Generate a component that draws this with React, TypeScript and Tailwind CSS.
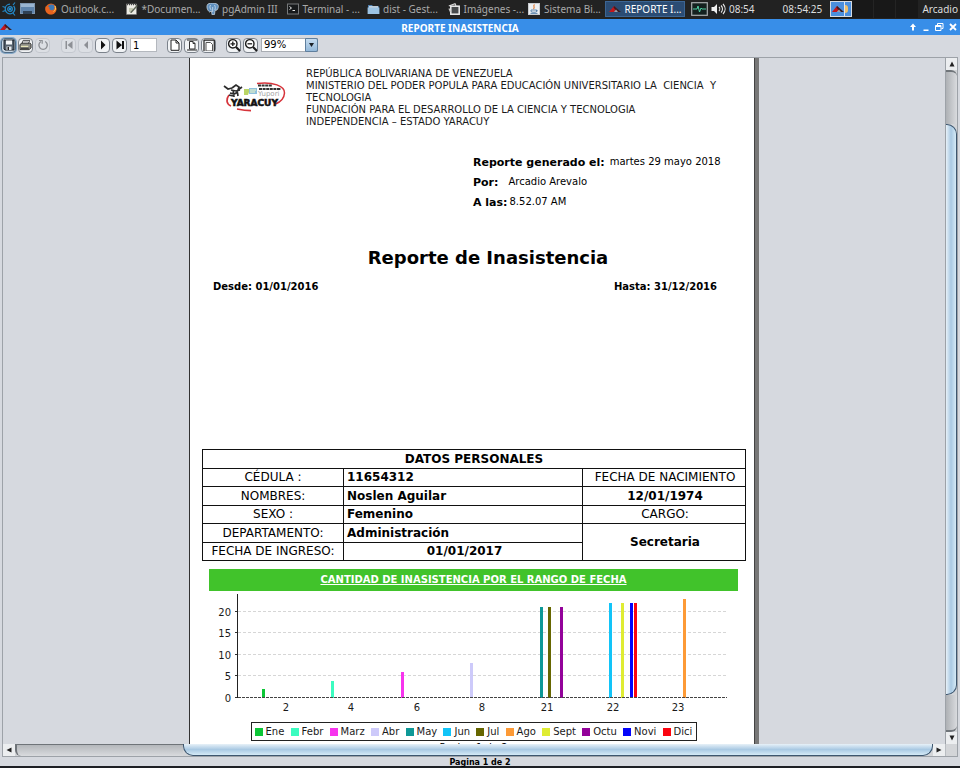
import React from "react";

const CHROME_FONT = "font-['Noto_Sans','Open_Sans',sans-serif]";
const REPORT_FONT = "font-['DejaVu_Sans',sans-serif]";

/* ---------- small drawings ---------- */

function SwirlIcon() {
  return (
    <svg width="14" height="14" viewBox="0 0 14 14" fill="none" stroke="#2389c9" strokeWidth="1.3">
      <circle cx="8" cy="7" r="4.800" strokeDasharray="22 4" />
      <circle cx="8" cy="7" r="2.300" />
      <path d="M.5 4.500l3 1M.5 9.500l3-1M11 3l2-2.500M11 11l2 2.500" strokeWidth="1.200" />
      <circle cx="8" cy="7" r=".7" fill="#2389c9" />
    </svg>
  );
}

function DesktopIcon() {
  return (
    <svg width="15" height="12" viewBox="0 0 15 12">
      <rect x=".5" y=".5" width="14" height="10" fill="#5f84ac" stroke="#7f97b1" />
      <rect x="1" y="1" width="13" height="3" fill="#9ab5d1" />
      <rect x="3" y="8" width="9" height="3" fill="#2f4155" />
    </svg>
  );
}

function FirefoxIcon() {
  return (
    <svg width="12" height="12" viewBox="0 0 12 12">
      <circle cx="6" cy="6" r="5.500" fill="#e0631c" />
      <circle cx="6.500" cy="5" r="3.400" fill="#3c78b8" />
      <path d="M.6 3.500C2 3.200 3 4 4.500 4.200 4 6 5 7.500 7 7.300c2 0 3-2 2.600-4.600 1.800 1.500 2.200 4 1 6C9 11.500 4 12.500 1.500 9.500 0 7.500.2 5 .6 3.500z" fill="#e8641f" />
      <path d="M10 3c1 2 .6 4.500-1.500 5.600" stroke="#ffd357" strokeWidth="1" fill="none" />
    </svg>
  );
}

function NotepadIcon() {
  return (
    <svg width="12" height="12" viewBox="0 0 12 12">
      <rect x=".5" y="1" width="10" height="10.500" fill="#ecebe4" stroke="#777" strokeWidth=".6" />
      <path d="M1 1.500h9" stroke="#444" strokeWidth="1.500" strokeDasharray="1 1" />
      <path d="M3 6h4M3 8h3" stroke="#9aa47e" />
      <path d="M4 9.500L10.800 2l1 1L5.500 10z" fill="#5d6455" />
    </svg>
  );
}

function ElephantIcon() {
  return (
    <svg width="13" height="12" viewBox="0 0 13 12">
      <path d="M2 1c3-1.500 6-1 9 0 2 1 1.500 4 0 6l-2 .5-.5 4-2.500.3L5.500 8 3.500 9C1 7 0 3 2 1z" fill="#5f8fbd" stroke="#d8e4ee" strokeWidth=".7" />
      <path d="M4.500 2c-1 2-.5 4 .8 5M8.500 2c1 1.500 1 3.500.3 5M6.700 4v5" stroke="#e3edf5" strokeWidth=".7" fill="none" />
    </svg>
  );
}

function TerminalIcon() {
  return (
    <svg width="12" height="12" viewBox="0 0 12 12">
      <rect x=".5" y="1" width="11" height="10" fill="#17191b" stroke="#77797b" />
      <path d="M2.500 3.500L4.500 5l-2 1.500M5.500 7.500h2.500" stroke="#e6e6e6" fill="none" />
    </svg>
  );
}

function FolderIcon() {
  return (
    <svg width="13" height="12" viewBox="0 0 13 12">
      <path d="M1 2h4l1 1.200h6V11H1z" fill="#4f7fae" />
      <path d="M.6 4.500h11.800V11H.6z" fill="#9cc3e3" />
      <path d="M2 3.300h9v1.200H2z" fill="#f2f5f7" />
    </svg>
  );
}

function PhotosIcon() {
  return (
    <svg width="12" height="12" viewBox="0 0 12 12" fill="none">
      <path d="M.8 3L7 .8l1 2" stroke="#d9d9d9" strokeWidth="1.200" />
      <rect x="2.800" y="3.200" width="8.400" height="8" fill="#474a4c" stroke="#efefef" strokeWidth="1.500" />
      <path d="M1 5.500l1.500 3.500" stroke="#c9c9c9" strokeWidth="1.200" />
    </svg>
  );
}

function JavaIcon() {
  return (
    <svg width="12" height="12" viewBox="0 0 12 12" fill="none">
      <rect x=".5" y=".5" width="11" height="11" fill="#eceff2" stroke="#c9ccd0" />
      <path d="M6.500 1.500C4.500 3 7.500 4 5.500 6" stroke="#e0752c" strokeWidth="1.100" />
      <path d="M3 7h5.500v1.500c0 1-5 1-5.500 0zM8.500 7.200c1.500 0 1 1.500-.3 1.500M2.500 10.400h7" stroke="#4f7ba6" strokeWidth=".9" />
    </svg>
  );
}

function RoofIcon() {
  return (
    <svg width="12" height="8" viewBox="0 0 12 8">
      <path d="M0 7L5 1l2.500 2.500L5 7z" fill="#c3161c" />
      <path d="M5 1l7 6H8L4.500 2.500z" fill="#3a1d22" />
      <path d="M5 7l2-2.500L9 7z" fill="#9c9fa8" />
    </svg>
  );
}

function MonitorIcon() {
  return (
    <svg width="17" height="14" viewBox="0 0 17 14" fill="none">
      <rect x=".7" y=".7" width="15.600" height="12.600" fill="#14211f" stroke="#a9adaf" strokeWidth="1.200" />
      <path d="M2 7h4l1-3 1.500 6L10 6l1 1h4" stroke="#4fd0a3" />
    </svg>
  );
}

function SpeakerIcon() {
  return (
    <svg width="15" height="12" viewBox="0 0 15 12" fill="none">
      <path d="M.5 4h2.500l3-3v10L3 8H.5z" fill="#f0f0f0" />
      <path d="M8 4c1 1 1 3 0 4M10 2.500c2 2 2 5 0 7M12 1c2.800 3 2.800 7 0 10" stroke="#e6e6e6" strokeWidth="1.100" />
    </svg>
  );
}

function SaveGlyph() {
  return (
    <svg width="12" height="12" viewBox="0 0 12 12">
      <path d="M1 1h10v10H2L1 10z" fill="#55606c" stroke="#1c232b" />
      <rect x="3" y="1.500" width="6" height="4" fill="#f4f6f8" />
      <rect x="3.500" y="7.500" width="5" height="3.500" fill="#e4e8ec" />
      <rect x="4.500" y="8" width="1.500" height="3" fill="#222" />
    </svg>
  );
}

function PrintGlyph() {
  return (
    <svg width="13" height="12" viewBox="0 0 14 12">
      <path d="M4.500 1h7L10 5H3z" fill="#fff" stroke="#222" strokeWidth=".9" />
      <path d="M1 5.500L3 4h9l1 1v4l-2 2H1z" fill="#8d8d86" stroke="#222" strokeWidth=".9" />
      <path d="M2 7.500h8" stroke="#e8e6b8" strokeWidth="1.400" />
      <path d="M2 9.500h8.500" stroke="#222" strokeWidth="1" />
      <path d="M5 2.500h5" stroke="#777" strokeWidth=".7" />
    </svg>
  );
}

function ReloadGlyph() {
  return (
    <svg width="12" height="12" viewBox="0 0 12 12" fill="none">
      <path d="M4 2.500a4.200 4.200 0 1 0 4.200 0" stroke="#8d9095" strokeWidth="1.400" />
      <path d="M2 1.500h3.200v3.200" stroke="#8d9095" strokeWidth="1.200" />
    </svg>
  );
}

function FirstGlyph() {
  return (
    <svg width="10" height="10" viewBox="0 0 10 10" fill="#8d9095">
      <path d="M1.500 1H3v8H1.500zM8.500 1v8L3.500 5z" />
    </svg>
  );
}

function PrevGlyph() {
  return (
    <svg width="10" height="10" viewBox="0 0 10 10" fill="#8d9095">
      <path d="M7 1v8L3 5z" />
    </svg>
  );
}

function NextGlyph() {
  return (
    <svg width="10" height="10" viewBox="0 0 10 10" fill="#111">
      <path d="M3 .5v9L7.500 5z" />
    </svg>
  );
}

function LastGlyph() {
  return (
    <svg width="10" height="10" viewBox="0 0 10 10" fill="#111">
      <path d="M7 1H9v8H7zM1.500.5v9L7 5z" />
    </svg>
  );
}

function SheetGlyph() {
  return (
    <svg width="12" height="12" viewBox="0 0 12 12">
      <path d="M2 1h5l3 3v7.300H2z" fill="#fff" stroke="#222" />
      <path d="M7 1v3h3" fill="none" stroke="#222" />
    </svg>
  );
}

function FitPageGlyph() {
  return (
    <svg width="12" height="12" viewBox="0 0 12 12">
      <path d="M1 1h10M1 11h10" stroke="#222" strokeWidth="1" />
      <path d="M3.500 2.500h3.500l2 2V10H3.500z" fill="#fff" stroke="#333" />
      <path d="M7 2.500v2h2" fill="none" stroke="#333" />
    </svg>
  );
}

function FitWidthGlyph() {
  return (
    <svg width="12" height="12" viewBox="0 0 12 12">
      <path d="M1 1v11M11.300 1v11M1 1.200h10" stroke="#222" strokeWidth="1.200" />
      <path d="M3 12V3.500h4.500l2 2V12z" fill="#fff" stroke="#555" />
    </svg>
  );
}

function ZoomGlyph({ plus }: { plus?: boolean }) {
  return (
    <svg width="14" height="14" viewBox="0 0 14 14" fill="none" stroke="#1c1c1c">
      <circle cx="5.800" cy="5.800" r="4.200" fill="#fff" strokeWidth="1.400" />
      <path d="M9 9l4 4" strokeWidth="2.200" />
      <path d={plus ? "M3.500 5.800h4.600M5.800 3.500v4.600" : "M3.500 5.800h4.600"} strokeWidth="1.300" />
    </svg>
  );
}

function YaracuyLogo() {
  return (
    <svg width="64" height="32" viewBox="0 0 64 32" role="img" aria-label="Fundacite Yaracuy">
      <path d="M34 2.500C50 .5 62 5 61.500 12c-.3 5-4 9-9 11" fill="none" stroke="#d6333a" strokeWidth="1.500" />
      <path d="M6 14C3 18 3 23 8 25M14 28c5 1 9 1.600 14 1.600" fill="none" stroke="#d6333a" strokeWidth="1.700" />
      <path d="M1 5l4 3 4-1M9 7l4-3 3 2-1 3 4-3M8 9l5 1 4-1M7 12l4 1 4-2M10 9l1 7M14 9l1 6M6 14l4 1" fill="none" stroke="#2c2c2c" strokeWidth="1.700" />
      <path d="M21 8h6l-2 6h-4z" fill="#b9d566" />
      <path d="M26 7h8v6h-8z" fill="#8fc0dd" />
      <path d="M27 9h6M27 11h5" stroke="#f3f9c4" strokeWidth="1" />
      <path d="M35 4.500h14M36 8h22" stroke="#333" strokeWidth="1.800" strokeDasharray="3 .6" />
      <text x="35" y="15" fontSize="7" fill="#a5a5a5" fontFamily="DejaVu Sans, sans-serif">Yupori</text>
      <text x="8" y="25" fontSize="9" fontWeight="bold" fill="#111" stroke="#111" strokeWidth=".6" fontFamily="DejaVu Sans, sans-serif">
        YARACUY
      </text>
    </svg>
  );
}

/* ---------- desktop panel ---------- */

const tasks = [
  { label: "Outlook.c...", icon: <FirefoxIcon /> },
  { label: "*Documen...", icon: <NotepadIcon /> },
  { label: "pgAdmin III", icon: <ElephantIcon /> },
  { label: "Terminal - ...", icon: <TerminalIcon /> },
  { label: "dist - Gest...", icon: <FolderIcon /> },
  { label: "Imágenes -...", icon: <PhotosIcon /> },
  { label: "Sistema Bi...", icon: <JavaIcon /> },
  { label: "REPORTE I...", icon: <RoofIcon />, active: true },
];

function DesktopPanel() {
  return (
    <header className={`flex h-[19px] shrink-0 items-center bg-[#222222] pb-px text-[10px] leading-none text-[#dddddd] ${CHROME_FONT}`}>
      <button aria-label="Menú" className="ml-[2px]"><SwirlIcon /></button>
      <button aria-label="Escritorio" className="ml-1"><DesktopIcon /></button>
      <nav className="ml-[6px] grid h-full w-[644px] shrink-0 grid-cols-8 items-center">
        {tasks.map((t) => (
          <button
            key={t.label}
            className={
              t.active
                ? "flex h-4 items-center gap-[3px] border border-[#3c6594] bg-[#2b4c74] pl-[3px] whitespace-nowrap text-white"
                : "flex h-4 items-center gap-[3px] pl-1 whitespace-nowrap text-[#a9a9a9]"
            }
          >
            <span className="flex w-[13px] shrink-0">{t.icon}</span>
            {t.label}
          </button>
        ))}
      </nav>
      <div className="ml-[6px] flex items-center gap-[3px]">
        <MonitorIcon />
        <SpeakerIcon />
      </div>
      <span className="ml-[3px]">08:54</span>
      <span className="ml-7">08:54:25</span>
      <div className="ml-2 grid h-full grid-cols-[22px_22px_22px_22px] items-center bg-[#181818]">
        <button aria-label="Espacio 1" className="flex h-4 items-center border border-[#d5dbe2] bg-[#4b8fdd] pl-px">
          <RoofIcon />
          <span className="h-full w-px bg-[#dfe6ef]" />
          <span className="h-2 w-[3px] rounded-r-full bg-[#f0c069]" />
        </button>
        <button aria-label="Espacio 2" className="h-full border-r border-[#242424]" />
        <button aria-label="Espacio 3" className="h-full border-r border-[#242424]" />
        <button aria-label="Espacio 4" className="h-full" />
      </div>
      <span className="mr-[2px] ml-auto">Arcadio</span>
    </header>
  );
}

/* ---------- window chrome ---------- */

function TitleBar() {
  return (
    <div className={`flex h-4 shrink-0 items-center bg-[#388ee8] text-white ${CHROME_FONT}`}>
      <RoofIcon />
      <h1 className="flex-1 pt-px text-center text-[10px] leading-none font-bold">REPORTE INASISTENCIA</h1>
      <div className="flex items-center justify-end gap-[3px] pr-[2px]">
        <button aria-label="Enrollar">
          <svg width="10" height="10" viewBox="0 0 10 10"><path d="M5 1.500L8 5H6v3.500H4V5H2z" fill="#fff" /></svg>
        </button>
        <button aria-label="Minimizar">
          <svg width="10" height="10" viewBox="0 0 10 10"><path d="M2.500 7.500h5v1.500h-5z" fill="#fff" /></svg>
        </button>
        <button aria-label="Restaurar">
          <svg width="11" height="10" viewBox="0 0 11 10" fill="none" stroke="#fff"><path d="M3.500 3V1.500h5.500v5H7.500M1.500 3.500h5.500v5H1.500zM1.500 4.500h5.500" /></svg>
        </button>
        <button aria-label="Cerrar">
          <svg width="10" height="10" viewBox="0 0 10 10"><path d="M2 2l6 6M8 2L2 8" stroke="#fff" strokeWidth="1.800" /></svg>
        </button>
      </div>
    </div>
  );
}

function ToolButton({
  label,
  disabled,
  focused,
  children,
}: {
  label: string;
  disabled?: boolean;
  focused?: boolean;
  children: React.ReactNode;
}) {
  const look = disabled
    ? "border-[#c4c8cf] bg-[#dcdfe4]"
    : focused
      ? "border-[#4f6b86] bg-[#c9d6e2] ring-1 ring-[#86a9c8]"
      : "border-[#7b828b] bg-[#f1f3f5]";
  return (
    <button
      aria-label={label}
      disabled={disabled}
      className={`flex size-[15px] items-center justify-center rounded-[4px] border ${look}`}
    >
      <span className="flex shrink-0">{children}</span>
    </button>
  );
}

function Toolbar() {
  return (
    <div role="toolbar" className={`flex h-[22px] shrink-0 items-center bg-[#d6d9df] pb-[2px] pl-px text-[10px] ${REPORT_FONT}`}>
      <div className="flex gap-[2px]">
        <ToolButton label="Guardar" focused><SaveGlyph /></ToolButton>
        <ToolButton label="Imprimir"><PrintGlyph /></ToolButton>
        <ToolButton label="Recargar" disabled><ReloadGlyph /></ToolButton>
      </div>
      <div className="ml-[11px] flex gap-[2px]">
        <ToolButton label="Primera página" disabled><FirstGlyph /></ToolButton>
        <ToolButton label="Página anterior" disabled><PrevGlyph /></ToolButton>
        <ToolButton label="Página siguiente"><NextGlyph /></ToolButton>
        <ToolButton label="Última página"><LastGlyph /></ToolButton>
      </div>
      <input
        aria-label="Ir a la página"
        defaultValue="1"
        className="ml-[3px] h-[14px] w-[27px] border border-[#b4b8be] bg-white px-[2px] text-black outline-none"
      />
      <div className="ml-[10px] flex gap-[2px]">
        <ToolButton label="Tamaño real"><SheetGlyph /></ToolButton>
        <ToolButton label="Ajustar página"><FitPageGlyph /></ToolButton>
        <ToolButton label="Ajustar ancho"><FitWidthGlyph /></ToolButton>
      </div>
      <div className="ml-[10px] flex gap-[2px]">
        <ToolButton label="Acercar"><ZoomGlyph plus /></ToolButton>
        <ToolButton label="Alejar"><ZoomGlyph /></ToolButton>
      </div>
      <div className="relative ml-[3px] flex">
        <select
          aria-label="Zoom"
          defaultValue="99"
          className="h-[14px] w-[57px] appearance-none border border-[#a9adb3] bg-white pl-[2px] leading-none text-black outline-none"
        >
          <option value="50">50%</option>
          <option value="99">99%</option>
          <option value="200">200%</option>
        </select>
        <span className="pointer-events-none absolute top-0 right-0 flex h-[14px] w-[13px] items-center justify-center rounded-r-[2px] border border-[#5f7f9e] bg-linear-to-b from-[#c6dcef] to-[#94b9da]">
          <svg width="5" height="4" viewBox="0 0 5 4"><path d="M0 0h5L2.500 4z" fill="#1a1f25" /></svg>
        </span>
      </div>
    </div>
  );
}

/* ---------- report ---------- */

function MetaRow({ label, value, gap }: { label: string; value: string; gap: string }) {
  return (
    <div className={`flex h-5 items-start ${gap}`}>
      <dt className="text-[11px] leading-[16px] font-bold">{label}</dt>
      <dd className="text-[10px] leading-[14px]">{value}</dd>
    </div>
  );
}

function PersonalData() {
  const cell = "border border-[#111111] p-0 leading-none";
  const rows = [
    { label: "CÉDULA :", value: "11654312", side: "FECHA DE NACIMIENTO", sideBold: false },
    { label: "NOMBRES:", value: "Noslen Aguilar", side: "12/01/1974", sideBold: true },
    { label: "SEXO :", value: "Femenino", side: "CARGO:", sideBold: false },
  ];
  return (
    <table className="mx-3 h-[112px] w-[544px] table-fixed border-collapse text-center text-[12px]">
      <colgroup>
        <col className="w-[141px]" />
        <col className="w-[239px]" />
        <col />
      </colgroup>
      <tbody>
        <tr>
          <th colSpan={3} className={`${cell} font-bold`}>DATOS PERSONALES</th>
        </tr>
        {rows.map((r) => (
          <tr key={r.label}>
            <td className={cell}>{r.label}</td>
            <td className={`${cell} pl-[3px] text-left font-bold`}>{r.value}</td>
            <td className={r.sideBold ? `${cell} pl-[2px] font-bold` : `${cell} pl-[2px]`}>{r.side}</td>
          </tr>
        ))}
        <tr>
          <td className={cell}>DEPARTAMENTO:</td>
          <td className={`${cell} pl-[3px] text-left font-bold`}>Administración</td>
          <td rowSpan={2} className={`${cell} pl-[2px] font-bold`}>Secretaria</td>
        </tr>
        <tr>
          <td className={cell}>FECHA DE INGRESO:</td>
          <td className={`${cell} pl-[3px] font-bold`}>01/01/2017</td>
        </tr>
      </tbody>
    </table>
  );
}

const series = [
  { name: "Ene", color: "#0cc636", swatch: "bg-[#0cc636]", value: 2, x: 53 },
  { name: "Febr", color: "#3bfcc0", swatch: "bg-[#3bfcc0]", value: 4, x: 122 },
  { name: "Marz", color: "#f734ee", swatch: "bg-[#f734ee]", value: 6, x: 192 },
  { name: "Abr", color: "#cdcafa", swatch: "bg-[#cdcafa]", value: 8, x: 261 },
  { name: "May", color: "#0e9897", swatch: "bg-[#0e9897]", value: 21, x: 331 },
  { name: "Jun", color: "#12c4f8", swatch: "bg-[#12c4f8]", value: 22, x: 400 },
  { name: "Jul", color: "#666600", swatch: "bg-[#666600]", value: 21, x: 339 },
  { name: "Ago", color: "#fd9a36", swatch: "bg-[#fd9a36]", value: 23, x: 474 },
  { name: "Sept", color: "#dfec33", swatch: "bg-[#dfec33]", value: 22, x: 412 },
  { name: "Octu", color: "#93029a", swatch: "bg-[#93029a]", value: 21, x: 351 },
  { name: "Novi", color: "#0505fa", swatch: "bg-[#0505fa]", value: 22, x: 421 },
  { name: "Dici", color: "#fb0510", swatch: "bg-[#fb0510]", value: 22, x: 425 },
];

const ticks = [
  { value: 0, y: 107 },
  { value: 5, y: 85 },
  { value: 10, y: 64 },
  { value: 15, y: 42 },
  { value: 20, y: 21 },
];

const categories = ["2", "4", "6", "8", "21", "22", "23"];

function AbsenceChart() {
  return (
    <svg viewBox="0 0 529 131" className="block w-full" fontSize="10" fontFamily="DejaVu Sans, sans-serif" fill="#1a1a1a">
      <g shapeRendering="crispEdges">
        {ticks.map((t) => (
          <g key={t.value}>
            {t.value > 0 && (
              <line x1="29" x2="517" y1={t.y - 0.5} y2={t.y - 0.5} stroke="#d6d6d6" strokeDasharray="3 2" />
            )}
            <line x1="26" x2="29" y1={t.y - 0.5} y2={t.y - 0.5} stroke="#333" />
          </g>
        ))}
        {series.map((s) => {
          const h = Math.round(s.value * 4.32);
          return <rect key={s.name} x={s.x} y={107 - h} width="3" height={h} fill={s.color} />;
        })}
        <line x1="28.500" x2="28.500" y1="3" y2="107" stroke="#222" />
        <line x1="29" x2="518" y1="106.500" y2="106.500" stroke="#444" strokeDasharray="3 1" />
      </g>
      {ticks.map((t) => (
        <text key={t.value} x="22" y={t.y + 4} textAnchor="end">{t.value}</text>
      ))}
      {categories.map((c, i) => (
        <text key={c} x={77 + Math.round(i * 65.3)} y="120" textAnchor="middle">{c}</text>
      ))}
    </svg>
  );
}

function Legend() {
  return (
    <ul className="mx-auto flex h-[19px] w-[446px] items-center justify-between border border-[#222222] px-[3px] text-[10px] leading-none text-[#1a1a1a]">
      {series.map((s) => (
        <li key={s.name} className="flex items-center gap-[3px]">
          <span className={`size-2 ${s.swatch}`} />
          {s.name}
        </li>
      ))}
    </ul>
  );
}

function ReportPage() {
  return (
    <article className="mx-auto w-[570px] shrink-0 border-r-4 border-l border-l-[#333333] border-r-[#777777]">
      <div className={`h-[900px] border-r border-[#444444] bg-white text-black ${REPORT_FONT}`}>
        <div className="flex h-[97px] pt-[10px] pl-[33px]">
          <div className="w-[83px] shrink-0 pt-[13px]"><YaracuyLogo /></div>
          <p className="text-[10px] leading-[12px] whitespace-pre text-[#1a1a1a]">
            {"REPÚBLICA BOLIVARIANA DE VENEZUELA\nMINISTERIO DEL PODER POPULA PARA EDUCACIÓN UNIVERSITARIO LA  CIENCIA  Y\nTECNOLOGIA\nFUNDACIÓN PARA EL DESARROLLO DE LA CIENCIA Y TECNOLOGIA\nINDEPENDENCIA – ESTADO YARACUY"}
          </p>
        </div>
        <dl className="h-[89px] pl-[283px]">
          <MetaRow label="Reporte generado el:" value="martes 29 mayo 2018" gap="gap-[5px]" />
          <MetaRow label="Por:" value="Arcadio Arevalo" gap="gap-[10px]" />
          <MetaRow label="A las:" value="8.52.07 AM" gap="gap-[2px]" />
        </dl>
        <h2 className="pl-8 text-center text-[18px] leading-[28px] font-bold">Reporte de Inasistencia</h2>
        <div className="flex h-[177px] justify-between pt-2 pr-[37px] pl-[23px] text-[10px] leading-[14px] font-bold">
          <span>Desde: 01/01/2016</span>
          <span>Hasta: 31/12/2016</span>
        </div>
        <PersonalData />
        <section className="mt-2 ml-[19px] w-[529px]">
          <h3 className="h-[22px] bg-[#41c32b] text-center text-[10px] leading-[22px] font-bold text-white underline">
            CANTIDAD DE INASISTENCIA POR EL RANGO DE FECHA
          </h3>
          <AbsenceChart />
          <Legend />
          <p className="mt-px text-center text-[10px] leading-[12px]">Pagina 1 de 2</p>
        </section>
      </div>
    </article>
  );
}

/* ---------- scroll bars and status ---------- */

function ScrollArrow({ label, d, className }: { label: string; d: string; className: string }) {
  return (
    <button aria-label={label} className={`flex shrink-0 items-center justify-center bg-[#eceef0] ${className}`}>
      <svg width="6" height="6" viewBox="0 0 6 6"><path d={d} fill="#222" /></svg>
    </button>
  );
}

function VerticalScrollBar() {
  return (
    <div className="flex w-3 shrink-0 flex-col border-l border-[#9da2a8] bg-[#d3d5d8]">
      <ScrollArrow label="Subir" d="M3 .5L5.500 5.500h-5z" className="h-3" />
      <div className="flex-[52] rounded-tr-md border-t-2 border-[#6f7479] bg-linear-to-r from-[#aeb1b5] to-[#d9dbde]" />
      <div className="flex-[573] rounded-r-[10px] border border-l-0 border-[#3d566f] bg-linear-to-r from-[#e7f1f8] via-[#a9c9e3] to-[#d5eaf6]" />
      <div className="flex-[35] rounded-br-md border-b-2 border-[#6f7479] bg-linear-to-r from-[#aeb1b5] to-[#d9dbde]" />
      <ScrollArrow label="Bajar" d="M.5.5h5L3 5.500z" className="h-3" />
    </div>
  );
}

function HorizontalScrollBar() {
  return (
    <div className="flex h-[13px] shrink-0 border-b border-[#9da2a8] bg-[#d3d5d8]">
      <ScrollArrow label="Izquierda" d="M5.500.5v5L.5 3z" className="w-3" />
      <div className="flex-[167] rounded-bl-md border-t border-l-2 border-[#6f7479] bg-linear-to-b from-[#b4b7bb] to-[#d9dbde]" />
      <div className="flex-[751] rounded-b-[10px] border border-t-0 border-[#3d566f] bg-linear-to-b from-[#e7f1f8] via-[#a9c9e3] to-[#d5eaf6]" />
      <ScrollArrow label="Derecha" d="M.5.5v5L5.500 3z" className="w-3" />
      <div className="w-3 shrink-0 border-l border-[#b9bdc2]" />
    </div>
  );
}

export default function App() {
  return (
    <div className="flex h-screen flex-col overflow-hidden bg-[#1d1f24]">
      <DesktopPanel />
      <TitleBar />
      <Toolbar />
      <main className="flex min-h-0 flex-1 flex-col bg-[#d6d9df] px-[2px]">
        <div className="flex min-h-0 flex-1 flex-col border-x border-t border-[#9da2a8]">
          <div className="flex min-h-0 flex-1">
            <div className="min-w-0 flex-1 overflow-hidden"><ReportPage /></div>
            <VerticalScrollBar />
          </div>
          <HorizontalScrollBar />
        </div>
      </main>
      <footer className={`mb-[2px] h-[9px] shrink-0 bg-[#d6d9df] pt-px text-center text-[8px] leading-[9px] font-bold text-black ${REPORT_FONT}`}>
        Pagina 1 de 2
      </footer>
    </div>
  );
}
